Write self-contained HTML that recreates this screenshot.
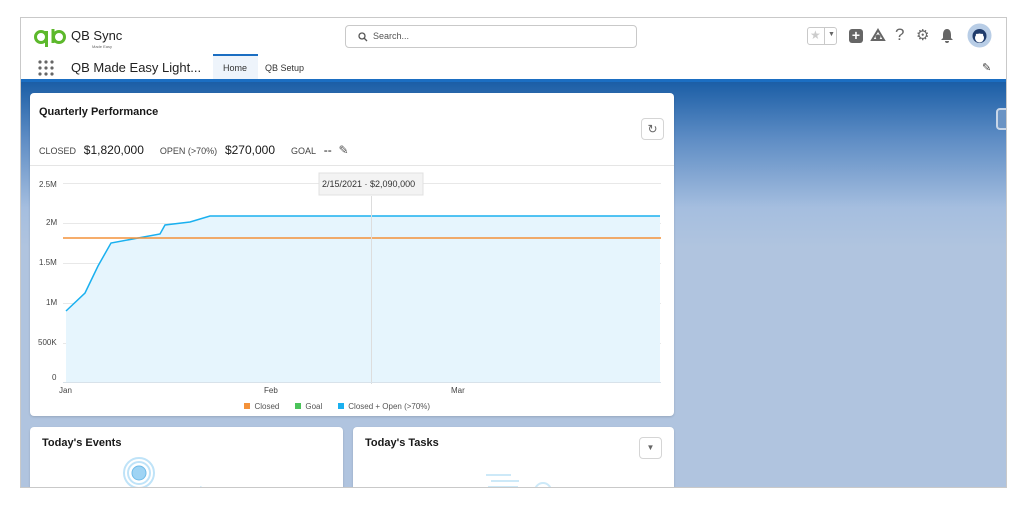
<!DOCTYPE html>
<html><head><meta charset="utf-8"><style>
*{box-sizing:border-box;margin:0;padding:0}
body{width:1021px;height:512px;background:#fff;font-family:"Liberation Sans",sans-serif;position:relative;overflow:hidden;color:#181818}
.frame{position:absolute;left:20px;top:17px;width:987px;height:471px;border:1px solid #c9c9c9;overflow:hidden;background:linear-gradient(#1b5ea6 64px,#5d8cc4 120px,#a5bedf 190px,#b0c4df 230px)}
.hdr{position:absolute;left:0;top:0;width:100%;height:64px;background:#fff;border-bottom:3px solid #1b6ec2}
.abs{position:absolute}
.card{position:absolute;background:#fff;border-radius:4px;box-shadow:0 1px 2px rgba(0,0,0,.15)}
.lbl{font-size:9px;color:#444}
.val{font-size:12px;color:#181818}
.ax{position:absolute;font-size:8px;color:#444}
</style></head><body>
<div class="frame">
<div class="hdr">
 <svg class="abs" style="left:13px;top:10px" width="36" height="20" viewBox="0 0 36 20"><circle cx="7" cy="9" r="5.5" fill="none" stroke="#5cb82b" stroke-width="3"/><line x1="12.5" y1="3" x2="12.5" y2="19" stroke="#5cb82b" stroke-width="3"/><line x1="19" y1="1" x2="19" y2="15" stroke="#5cb82b" stroke-width="3"/><circle cx="25" cy="9" r="5.5" fill="none" stroke="#5cb82b" stroke-width="3"/></svg>
 <div class="abs" style="left:50px;top:10px;font-size:13px;color:#222">QB Sync</div>
 <div class="abs" style="left:71px;top:26px;font-size:4px;color:#666">Made Easy</div>
 <div class="abs" style="left:324px;top:7px;width:292px;height:23px;border:1px solid #c9c9c9;border-radius:4px"></div>
 <svg class="abs" style="left:337px;top:14px" width="10" height="10"><circle cx="4" cy="4" r="3" fill="none" stroke="#555" stroke-width="1.3"/><line x1="6" y1="6" x2="9" y2="9" stroke="#555" stroke-width="1.3"/></svg>
 <div class="abs" style="left:352px;top:13px;font-size:9px;color:#555">Search...</div>
 <svg class="abs" style="left:16px;top:41px" width="18" height="18">
  <g fill="#666"><circle cx="3" cy="3" r="1.6"/><circle cx="9" cy="3" r="1.6"/><circle cx="15" cy="3" r="1.6"/><circle cx="3" cy="9" r="1.6"/><circle cx="9" cy="9" r="1.6"/><circle cx="15" cy="9" r="1.6"/><circle cx="3" cy="15" r="1.6"/><circle cx="9" cy="15" r="1.6"/><circle cx="15" cy="15" r="1.6"/></g></svg>
 <div class="abs" style="left:50px;top:42px;font-size:13px;color:#222">QB Made Easy Light...</div>
 <div class="abs" style="left:192px;top:36px;width:45px;height:25px;background:#eef4fb;border-top:2px solid #1b6ec2"></div>
 <div class="abs" style="left:202px;top:45px;font-size:9px;color:#333">Home</div>
 <div class="abs" style="left:244px;top:45px;font-size:9px;color:#333">QB Setup</div>
 <div class="abs" style="left:786px;top:9px;width:30px;height:18px;border:1px solid #c9c9c9;border-radius:3px"></div>
 <div class="abs" style="left:789px;top:10px;font-size:12px;color:#ccc">★</div>
 <div class="abs" style="left:803px;top:9px;width:1px;height:18px;background:#c9c9c9"></div>
 <div class="abs" style="left:807px;top:13px;font-size:7px;color:#666">▼</div>
 <div class="abs" style="left:828px;top:11px;width:14px;height:14px;background:#666;border-radius:3px;color:#fff;font-size:14px;line-height:13px;text-align:center;font-weight:bold">+</div>
 <svg class="abs" style="left:849px;top:10px" width="16" height="16"><path d="M8 2L14 12H2Z" fill="none" stroke="#666" stroke-width="2"/><circle cx="8" cy="9" r="2.5" fill="#666"/></svg>
 <div class="abs" style="left:874px;top:7px;font-size:17px;color:#666">?</div>
 <div class="abs" style="left:895px;top:8px;font-size:15px;color:#666">⚙</div>
 <svg class="abs" style="left:919px;top:10px" width="14" height="16"><path d="M7 1C4 1 3 4 3 7V10L1 12H13L11 10V7C11 4 10 1 7 1Z M5 13A2 2 0 0 0 9 13Z" fill="#666"/></svg>
 <svg class="abs" style="left:946px;top:5px" width="25" height="25"><circle cx="12.5" cy="12.5" r="12" fill="#b8cde6"/><circle cx="12.5" cy="13" r="7" fill="#1f3b6b"/><circle cx="12.5" cy="15" r="4.5" fill="#fff"/><circle cx="10" cy="12" r="1.2" fill="#fff"/><circle cx="15" cy="12" r="1.2" fill="#fff"/></svg>
 <div class="abs" style="left:961px;top:43px;font-size:11px;color:#444">✎</div>
</div>
<div class="abs" style="left:975px;top:90px;width:14px;height:22px;border:2px solid #c8d6e8;border-radius:4px;background:#6a93c4"></div>

<div class="card" style="left:9px;top:75px;width:644px;height:323px">
 <div class="abs" style="left:9px;top:13px;font-size:11px;font-weight:bold">Quarterly Performance</div>
 <div class="abs" style="left:611px;top:25px;width:23px;height:22px;border:1px solid #d5d5d5;border-radius:4px;text-align:center;font-size:12px;color:#666;line-height:20px">↻</div>
 <div class="abs" style="left:9px;top:48px;white-space:nowrap"><span class="lbl">CLOSED</span> <span class="val">&nbsp;$1,820,000</span><span class="lbl" style="margin-left:16px">OPEN (&gt;70%)</span> <span class="val">&nbsp;$270,000</span><span class="lbl" style="margin-left:16px">GOAL</span> <span class="val">&nbsp;--&nbsp; <span style="color:#555">✎</span></span></div>
 <div class="abs" style="left:0;top:72px;width:644px;height:1px;background:#e5e5e5"></div>
</div>
<svg class="abs" style="left:0;top:0" width="987" height="400">
 <g stroke="#e8e8e8" stroke-width="1"><line x1="42" y1="165.5" x2="640" y2="165.5"/><line x1="42" y1="205.5" x2="640" y2="205.5"/><line x1="42" y1="245.5" x2="640" y2="245.5"/><line x1="42" y1="285.5" x2="640" y2="285.5"/><line x1="42" y1="325.5" x2="640" y2="325.5"/></g>
 <polygon points="45,293 64,275 77,248 90,225 139,216 144,207 169,204 189,198 639,198 639,364 45,364" fill="#e6f5fd"/>
 <polyline points="45,293 64,275 77,248 90,225 139,216 144,207 169,204 189,198 639,198" fill="none" stroke="#1ab0ef" stroke-width="1.5"/>
 <line x1="42" y1="220" x2="640" y2="220" stroke="#f4923a" stroke-width="1.5"/>
 <line x1="350.5" y1="178" x2="350.5" y2="366" stroke="#ddd" stroke-width="1"/>
 <line x1="42" y1="364.5" x2="640" y2="364.5" stroke="#d8e2ea" stroke-width="1"/>
 <rect x="298" y="155" width="104" height="22" fill="#f3f3f3" stroke="#e0e0e0"/>
</svg>
<div class="abs" style="left:301px;top:161px;font-size:9px;color:#333">2/15/2021 · $2,090,000</div>
<div class="ax" style="left:18px;top:162px">2.5M</div>
<div class="ax" style="left:25px;top:200px">2M</div>
<div class="ax" style="left:18px;top:240px">1.5M</div>
<div class="ax" style="left:25px;top:280px">1M</div>
<div class="ax" style="left:17px;top:320px">500K</div>
<div class="ax" style="left:31px;top:355px">0</div>
<div class="ax" style="left:38px;top:368px">Jan</div>
<div class="ax" style="left:243px;top:368px">Feb</div>
<div class="ax" style="left:430px;top:368px">Mar</div>
<div class="abs" style="left:223px;top:384px;font-size:8px;color:#555;white-space:nowrap"><span style="display:inline-block;width:6px;height:6px;background:#f4923a"></span>&nbsp; Closed &nbsp;&nbsp;&nbsp;&nbsp;&nbsp; <span style="display:inline-block;width:6px;height:6px;background:#4bc35a"></span>&nbsp; Goal &nbsp;&nbsp;&nbsp;&nbsp;&nbsp; <span style="display:inline-block;width:6px;height:6px;background:#1ab0ef"></span>&nbsp; Closed + Open (&gt;70%)</div>

<div class="card" style="left:9px;top:409px;width:313px;height:80px">
 <div class="abs" style="left:12px;top:10px;font-size:11px;font-weight:bold">Today's Events</div>
 <svg class="abs" style="left:90px;top:30px" width="100" height="40"><circle cx="19" cy="16" r="15" fill="none" stroke="#bfe3f8" stroke-width="2"/><circle cx="19" cy="16" r="11" fill="none" stroke="#bfe3f8" stroke-width="2"/><circle cx="19" cy="16" r="7" fill="#9fd4f4" stroke="#6fbbe8"/><path d="M80 30l6 3" stroke="#bfe3f8" stroke-width="2"/></svg>
</div>
<div class="card" style="left:332px;top:409px;width:321px;height:80px">
 <div class="abs" style="left:12px;top:10px;font-size:11px;font-weight:bold">Today's Tasks</div>
 <div class="abs" style="left:286px;top:10px;width:23px;height:22px;border:1px solid #d5d5d5;border-radius:4px;text-align:center;font-size:8px;color:#666;line-height:20px">▼</div>
 <svg class="abs" style="left:130px;top:40px" width="80" height="30"><path d="M3 8h25M8 14h28M5 20h30" stroke="#cde9f8" stroke-width="2" fill="none"/><circle cx="60" cy="24" r="8" fill="none" stroke="#cde9f8" stroke-width="2"/></svg>
</div>
</div>
</body></html>
